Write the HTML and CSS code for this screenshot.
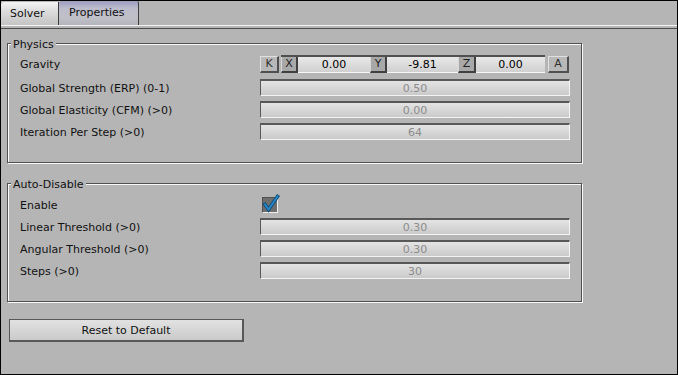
FILE: index.html
```html
<!DOCTYPE html>
<html>
<head>
<meta charset="utf-8">
<link rel="stylesheet" href="styles.css">
</head>
<body>
<div class="window">
  <div class="tabs">
    <div class="tab">Solver</div>
    <div class="tab active">Properties</div>
  </div>
  <div class="tabrule"></div>
  <div class="content">
    <div class="group physics">
      <div class="legend">Physics</div>
      <div class="row gravity">
        <span class="label">Gravity</span>
        <div class="vec">
          <span class="rbtn k">K</span>
          <div class="xyz">
            <span class="axis ax-x">X</span><span class="vfield fx">0.00</span>
            <span class="axis ax-y">Y</span><span class="vfield fy">-9.81</span>
            <span class="axis ax-z">Z</span><span class="vfield fz">0.00</span>
          </div>
          <span class="rbtn a">A</span>
        </div>
      </div>
      <div class="row"><span class="label">Global Strength (ERP) (0-1)</span><span class="field">0.50</span></div>
      <div class="row"><span class="label">Global Elasticity (CFM) (&gt;0)</span><span class="field">0.00</span></div>
      <div class="row"><span class="label">Iteration Per Step (&gt;0)</span><span class="field">64</span></div>
    </div>
    <div class="group auto">
      <div class="legend">Auto-Disable</div>
      <div class="row enable">
        <span class="label">Enable</span>
        <span class="check"><svg viewBox="0 0 16 17" width="16" height="17"><path d="M2 9.5 L5.5 14.5 L14.5 1.5" fill="none" stroke="#0d4f7c" stroke-width="3.6" stroke-linecap="square"/><path d="M2 9.5 L5.5 14.5 L14.5 1.5" fill="none" stroke="#2a88c8" stroke-width="1.8" stroke-linecap="square"/></svg></span>
      </div>
      <div class="row"><span class="label">Linear Threshold (&gt;0)</span><span class="field">0.30</span></div>
      <div class="row"><span class="label">Angular Threshold (&gt;0)</span><span class="field">0.30</span></div>
      <div class="row"><span class="label">Steps (&gt;0)</span><span class="field">30</span></div>
    </div>
    <button class="reset">Reset to Default</button>
  </div>
</div>
</body>
</html>
```

FILE: styles.css
```css
html, body {
  margin: 0;
  padding: 0;
  background: #b5b5b5;
}
body {
  font-family: "DejaVu Sans", Verdana, sans-serif;
  font-size: 11px;
  color: #111;
}
.window {
  box-sizing: border-box;
  width: 678px;
  height: 375px;
  border: 1px solid #000;
  background: #b5b5b5;
}
.tabs {
  display: flex;
  align-items: flex-end;
  height: 24px;
}
.tab {
  box-sizing: border-box;
  height: 23px;
  width: 58px;
  padding-left: 9px;
  line-height: 23px;
  border-right: 1px solid #3c3c3c;
  border-top-left-radius: 3px;
  background: linear-gradient(#f4f4f4, #dcdcdc 40%, #c4c4c4);
}
.tab.active {
  height: 24px;
  width: 80px;
  padding-left: 10px;
  line-height: 24px;
  border-top-left-radius: 3px;
  border-top-right-radius: 2px;
  background: linear-gradient(#9c9cc0, #bcbccc 30%, #c0c0c8 70%, #b4b4bc);
}
.tabrule {
  height: 2px;
  border-top: 1px solid #f4f4f4;
  border-bottom: 1px solid #4c4c4c;
}
.content {
  padding: 0 6px;
}
.group {
  box-sizing: border-box;
  width: 575px;
  border: 1px solid #505050;
  box-shadow: 1px 1px 0 #fafafa, inset 1px 1px 0 #fafafa;
  padding: 0 11px 22px 12px;
}
.physics {
  margin-top: 14px;
}
.auto {
  margin-top: 20px;
}
.legend {
  display: block;
  width: max-content;
  margin: -7px 0 0 -9px;
  padding: 0 2px 0 2px;
  height: 13px;
  line-height: 15px;
  background: #b5b5b5;
}
.row {
  display: flex;
  align-items: center;
  height: 17px;
  margin-top: 5px;
}
.label {
  width: 240px;
  height: 17px;
  flex: none;
  line-height: 19px;
}
.field {
  box-sizing: border-box;
  width: 310px;
  height: 17px;
  border-top: 2px solid #585858;
  border-left: 1px solid #585858;
  border-right: 1px solid #f4f4f4;
  border-bottom: 1px solid #f4f4f4;
  background: linear-gradient(#e4e4e4, #cacaca);
  color: #8c8c8c;
  text-align: center;
  line-height: 15px;
}
.physics .gravity {
  height: 18px;
  margin-top: 5px;
  margin-bottom: 6px;
}
.gravity .label {
  height: 18px;
}
.gravity + .row {
  margin-top: 0;
}
.vec {
  display: flex;
  align-items: flex-start;
  height: 18px;
  width: 309px;
}
.rbtn {
  box-sizing: border-box;
  height: 17px;
  margin-top: 1px;
  border-top: 1px solid #e0e0e0;
  border-left: 1px solid #e0e0e0;
  border-right: 2px solid #505050;
  border-bottom: 2px solid #505050;
  background: #b8b8b8;
  color: #303030;
  text-align: center;
  line-height: 14px;
}
.k { width: 19px; }
.a { width: 21px; margin-left: 3px; }
.xyz {
  display: flex;
  box-sizing: border-box;
  width: 264px;
  height: 18px;
  margin-left: 2px;
  border-top: 2px solid #505050;
}
.axis {
  box-sizing: border-box;
  height: 16px;
  border-left: 1px solid #d8d8d8;
  border-right: 2px solid #404040;
  border-bottom: 2px solid #404040;
  background: #a8a8a8;
  color: #202020;
  text-align: center;
  line-height: 14px;
}
.ax-x, .ax-y { width: 17px; }
.ax-z { width: 18px; }
.vfield {
  box-sizing: border-box;
  height: 16px;
  border-bottom: 1px solid #f8f8f8;
  background: linear-gradient(#e8e8e8, #d0d0d0);
  color: #000;
  text-align: center;
  line-height: 15px;
}
.fx { width: 72px; }
.fy { width: 71px; }
.fz { width: 69px; }
.auto .enable {
  margin-top: 6px;
}
.check {
  box-sizing: border-box;
  width: 16px;
  height: 16px;
  margin-left: 2px;
  border-top: 1px solid #505050;
  border-left: 1px solid #505050;
  border-right: 1px solid #f0f0f0;
  border-bottom: 1px solid #f0f0f0;
  background: #6e6e6e;
}
.check svg {
  display: block;
  margin: -3px 0 0 0;
  overflow: visible;
}
.reset {
  display: block;
  box-sizing: border-box;
  width: 235px;
  height: 23px;
  margin: 17px 0 0 2px;
  padding: 0;
  border: 2px solid #585858;
  border-top-width: 1px;
  border-left-width: 1px;
  background: linear-gradient(#e2e2e2, #cacaca);
  font-family: "DejaVu Sans", Verdana, sans-serif;
  font-size: 11px;
  color: #111;
  text-align: center;
}
```
